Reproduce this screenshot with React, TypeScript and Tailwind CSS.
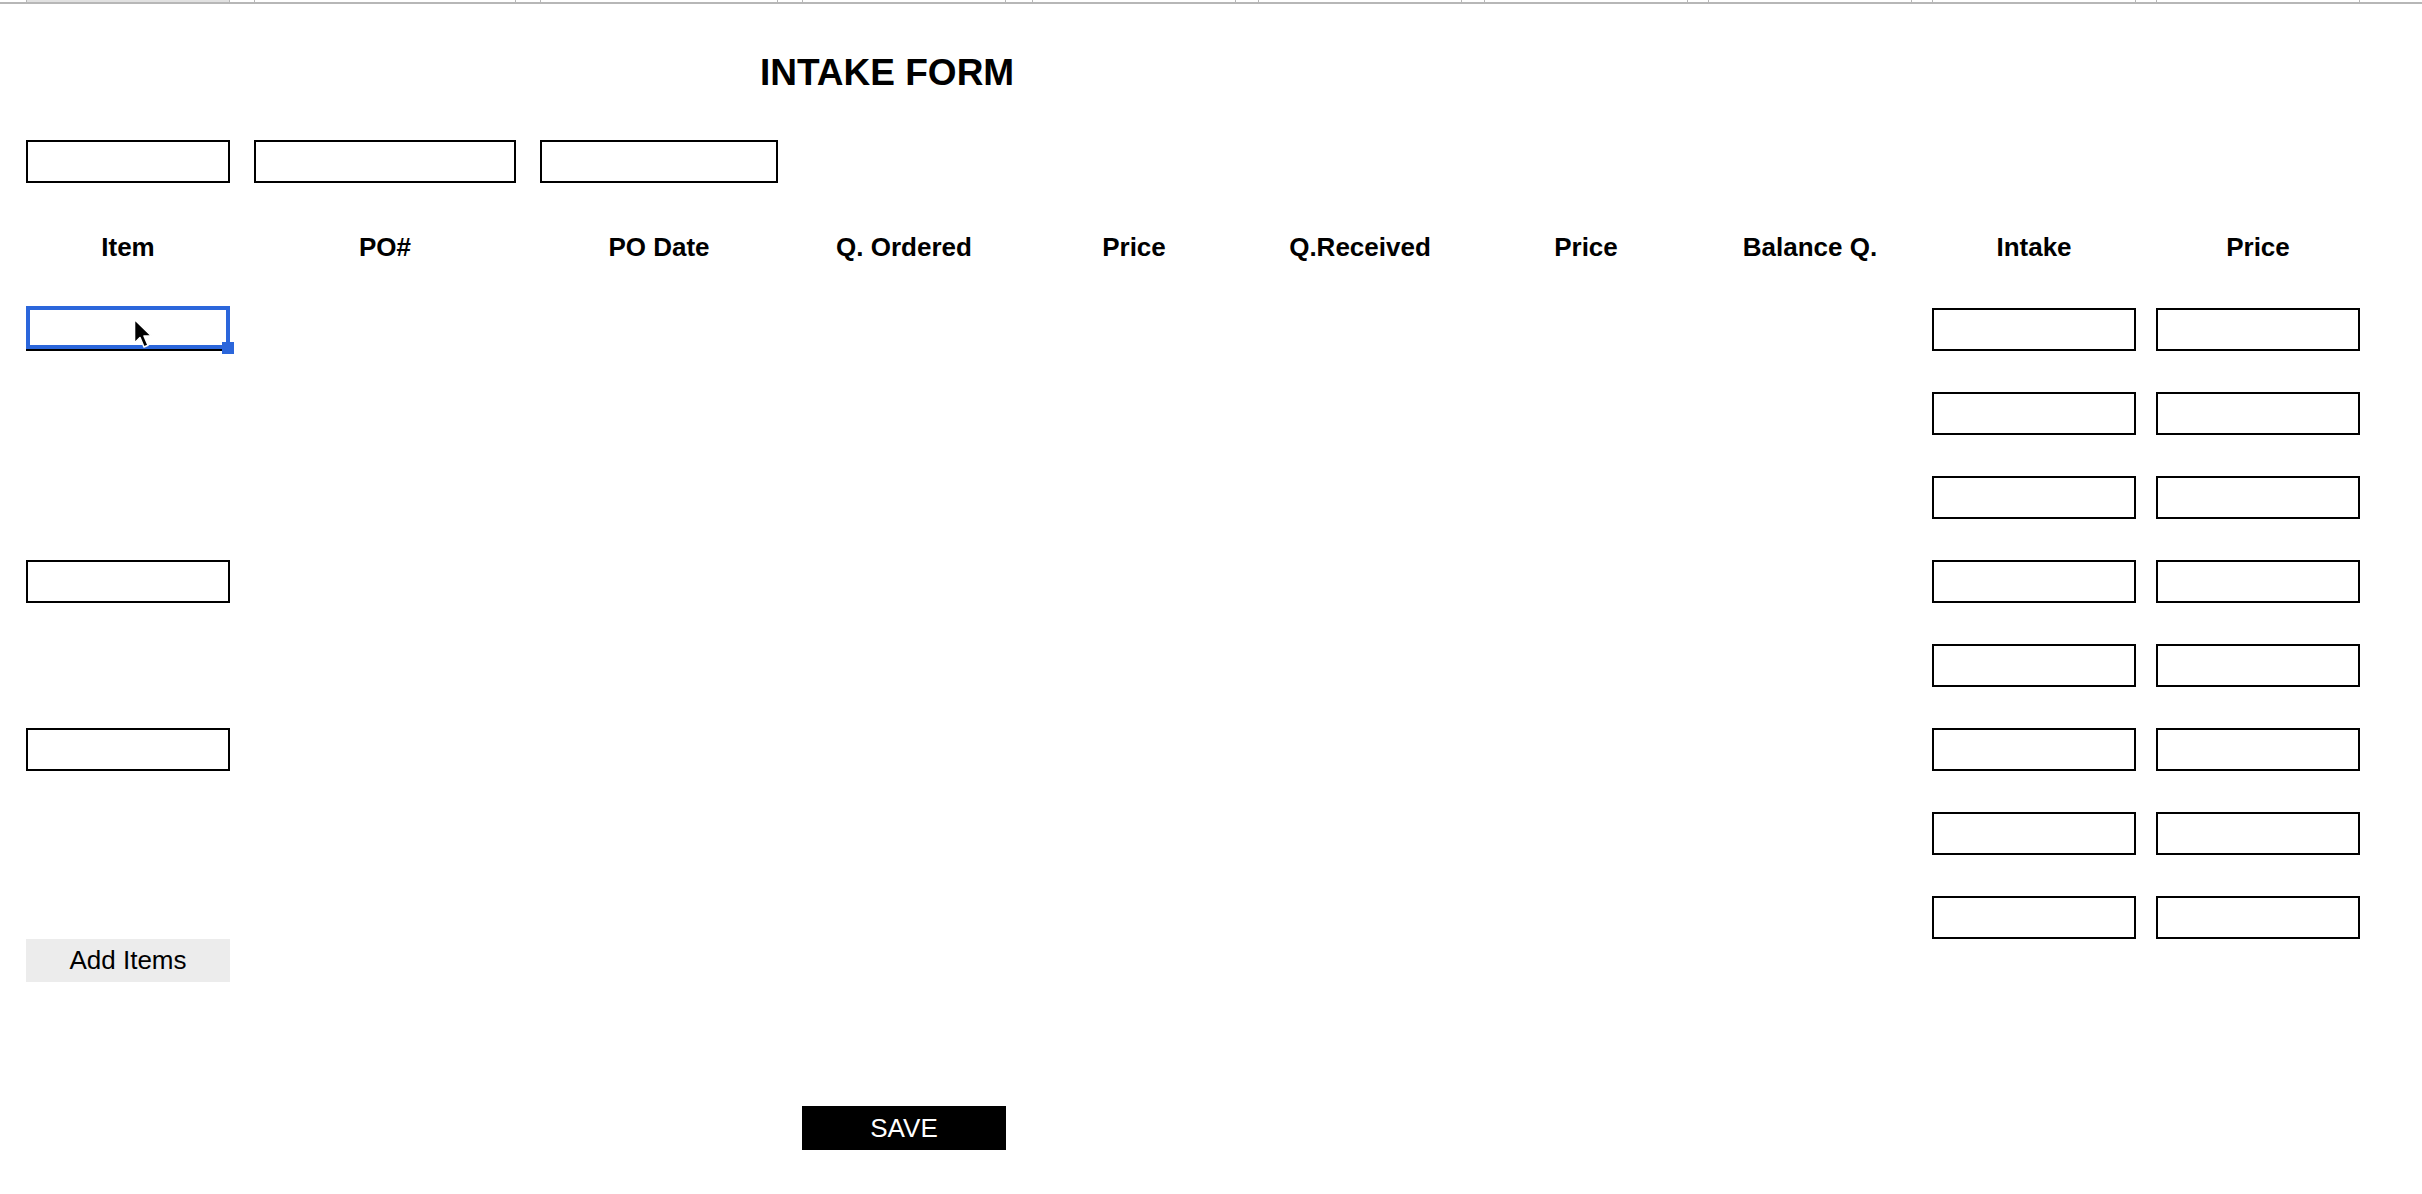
const GRID = "grid grid-cols-[228px_286px_262px_230px_226px_226px_224px_224px_224px_224px]";

const WIDTHS = [
  "w-[204px]",
  "w-[262px]",
  "w-[238px]",
  "w-[204px]",
  "w-[204px]",
  "w-[204px]",
  "w-[204px]",
  "w-[204px]",
  "w-[204px]",
  "w-[204px]",
];

const HEADERS = ["Item", "PO#", "PO Date", "Q. Ordered", "Price", "Q.Received", "Price", "Balance Q.", "Intake", "Price"];

// which rows have an item box in the first column
const ITEM_ROWS = ["selected", "", "", "box", "", "box", "", ""];

function Box({ w = "w-[204px]" }: { w?: string }) {
  return <input type="text" readOnly className={`${w} h-[43px] border-2 border-black bg-white outline-none`} />;
}

function Cursor() {
  return (
    <svg width="22" height="32" viewBox="0 0 22 32" className="absolute left-[107px] top-[10px]">
      <path
        d="M1.5 1.5 L1.5 25 L7 19.5 L11 29 L15 27.3 L11 18 L18.5 18 Z"
        fill="#000"
        stroke="#fff"
        strokeWidth="1.6"
        strokeLinejoin="round"
      />
    </svg>
  );
}

function SelectedBox() {
  return (
    <div className="relative w-[204px]">
      <Box />
      <div className="absolute left-0 top-[-2px] h-[43px] w-[204px] border-4 border-[#2b66db]" />
      <div className="absolute left-[196px] top-[34px] h-[12px] w-[12px] bg-[#2b66db]" />
      <Cursor />
    </div>
  );
}

export default function App() {
  return (
    <main className="min-h-screen w-full bg-white font-['Liberation_Sans',Arial,sans-serif] text-black">
      {/* sheet column strip */}
      <div className="pl-[26px]">
        <div className={GRID}>
          {WIDTHS.map((w, i) => (
            <div
              key={i}
              className={`${w} h-[2px] border-x border-[#b7b7b7] ${i === 0 ? "bg-[#e1e1e1]" : ""}`}
            />
          ))}
        </div>
      </div>
      <div className="h-[2px] w-full bg-[#b7b7b7]" />

      <h1 className="mt-[48px] pl-[760px] text-[37px] font-bold leading-[42px]">INTAKE FORM</h1>

      <div className="mt-[46px] pl-[26px]">
        <div className={GRID}>
          <Box w="w-[204px]" />
          <Box w="w-[262px]" />
          <Box w="w-[238px]" />
        </div>

        <div className={`${GRID} mt-[43px]`}>
          {HEADERS.map((h, i) => (
            <div key={i} className={`${WIDTHS[i]} text-center text-[26px] font-bold leading-[42px]`}>
              {h}
            </div>
          ))}
        </div>

        <div className="mt-[40px] flex flex-col gap-[41px]">
          {ITEM_ROWS.map((kind, r) => (
            <div key={r} className={`${GRID} h-[43px]`}>
              <div>
                {kind === "selected" && <SelectedBox />}
                {kind === "box" && <Box />}
              </div>
              <div className="col-start-9">
                <Box />
              </div>
              <div>
                <Box />
              </div>
            </div>
          ))}
        </div>

        <div className={GRID}>
          <button className="flex h-[43px] w-[204px] items-center justify-center bg-[#ececec] text-[26px]">
            Add Items
          </button>
        </div>

        <div className={`${GRID} mt-[124px]`}>
          <button className="col-start-4 flex h-[44px] w-[204px] items-center justify-center bg-black text-[26px] text-white">
            SAVE
          </button>
        </div>
      </div>
    </main>
  );
}
